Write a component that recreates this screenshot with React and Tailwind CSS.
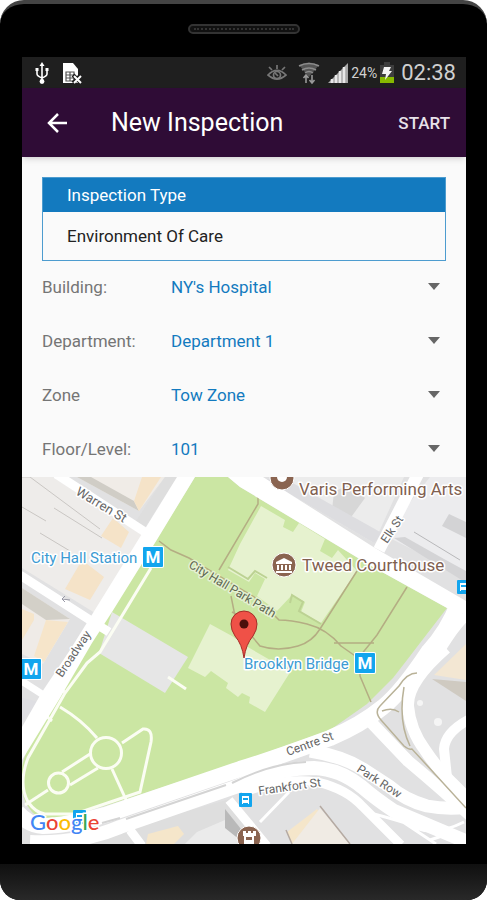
import React, { useState } from "react";

const fields = [
  { id: "building", label: "Building:", options: ["NY's Hospital"] },
  { id: "department", label: "Department:", options: ["Department 1"] },
  { id: "zone", label: "Zone", options: ["Tow Zone"] },
  { id: "floor", label: "Floor/Level:", options: ["101"] },
];

function StatusBar() {
  return (
    <div className="flex h-[31px] items-center bg-[#1f1f1f] pl-3 pr-2.5">
      <svg className="h-6 w-4" viewBox="0 0 16 24" fill="none" stroke="#fff" strokeWidth="1.6">
        <path d="M8 4v16M3 8v5q0 2 5 4M13 8v5q0 2-5 4" />
        <path d="M8 1l2.5 4h-5zM1.5 7h3v3h-3zM11.5 7h3v3h-3z" fill="#fff" stroke="none" />
        <circle cx="8" cy="20.5" r="2.4" fill="#fff" stroke="none" />
      </svg>
      <svg className="ml-3 h-6 w-5" viewBox="0 0 20 24">
        <path d="M1 2h10l5 6v14H1z" fill="#fff" />
        <path d="M4 11h8v9H4zM4 14h8M4 17h8M8 11v9" fill="none" stroke="#555" strokeWidth="1.2" />
        <path d="M11 14l8 8M19 14l-8 8" stroke="#1f1f1f" strokeWidth="4" />
        <path d="M12 15l7 7M19 15l-7 7" stroke="#fff" strokeWidth="2" />
      </svg>
      <div className="flex-1" />
      <svg className="h-6 w-5" viewBox="0 0 20 24" fill="none" stroke="#777" strokeWidth="1.7">
        <path d="M1 14q9-9 18 0q-9 8-18 0z" />
        <path d="M10 8V4M5 9L2 6M15 9l3-3M8 12l3 3" />
        <circle cx="10" cy="14" r="3.5" />
      </svg>
      <svg className="ml-2.5 h-6 w-6" viewBox="0 0 24 24">
        <path d="M2 4q10-5 20 0L12 16z" fill="#555" />
        <path d="M2 5q10-5 20 0M5 9q7-4 14 0M8 12q4-3 8 0" fill="none" stroke="#8c8c8c" strokeWidth="1.5" />
        <path d="M9 22v-7M6.500 17L9 14l2.500 3M15 14v7M12.500 19l2.500 3 2.500-3" fill="none" stroke="#999" strokeWidth="1.6" />
      </svg>
      <svg className="ml-1.5 h-6 w-[22px]" viewBox="0 0 22 24">
        <path d="M1 22L21 2v20z" fill="#a8a8a8" />
        <path d="M5 22v-4M9 22v-8M13 22V10M17 22V6" stroke="#e8e8e8" strokeWidth="2.5" />
      </svg>
      <span className="ml-0.5 text-sm text-[#d0d0d0]">24%</span>
      <svg className="ml-0.5 h-6 w-4" viewBox="0 0 16 24">
        <path d="M5 1h6v3h4v18H1V4h4z" fill="#3d3d3d" />
        <path d="M1 16h14v6H1z" fill="#86b900" />
        <path d="M5 6h7l-2 4h3l-7 9 1-6H3z" fill="#f5f5f5" />
      </svg>
      <span className="ml-1.5 text-[22px] text-[#d0d0d0]">02:38</span>
    </div>
  );
}

function SelectRow({ field }) {
  const [value, setValue] = useState(field.options[0]);

  return (
    <div className="flex h-[54px] items-center">
      <label htmlFor={field.id} className="w-[129px] text-[17px] text-[#757575]">
        {field.label}
      </label>
      <div className="relative flex-1">
        <select
          id={field.id}
          value={value}
          onChange={(e) => setValue(e.target.value)}
          className="w-full appearance-none bg-transparent text-[17px] text-[#137abf]"
        >
          {field.options.map((o) => (
            <option key={o}>{o}</option>
          ))}
        </select>
        <svg className="pointer-events-none absolute right-1.5 top-2 h-2 w-3" viewBox="0 0 12 8">
          <path d="M0 0h12L6 7z" fill="#666" />
        </svg>
      </div>
    </div>
  );
}

function Metro({ x, y }) {
  return (
    <g transform={`translate(${x} ${y})`}>
      <rect width="22" height="22" rx="2" fill="#fff" />
      <rect x="1" y="1" width="20" height="20" rx="1" fill="#12a5ee" />
      <text x="11" y="17" textAnchor="middle" fontSize="17" fontWeight="700" fill="#fff">M</text>
    </g>
  );
}

function BusStop({ x, y }) {
  return (
    <g transform={`translate(${x} ${y})`}>
      <rect width="13" height="14" rx="1" fill="#12a5ee" />
      <path d="M3 3h7v8H9v-1H4v1H3z" fill="#fff" />
      <path d="M4 5h5v2H4z" fill="#12a5ee" />
    </g>
  );
}

function Buildings() {
  return (
    <g>
      {/* west of Broadway */}
      <path d="M22 477h31l92 60-42 73-8 3-73-45z" fill="#eeecea" />
      <path d="M77 477l62 34 26-34z" fill="#f0ece7" />
      <path d="M77 477l62 34-5-10-43-24z" fill="#d0cdc6" />
      <path d="M22 477h8l70 52M22 507l24 14M54 508l48 30M40 533l30 18" fill="none" stroke="#c9c6c3" />
      <path d="M142 477h19l-22 34-5-10z" fill="#f5e3c8" />
      <path d="M113 518l16 14-8 16-20-12zM82 560l22 17-14 23-25-11z" fill="#f5e3c8" />
      <path d="M165 477h12l-32 50-9-6z" fill="#dedede" />
      <path d="M22 588l48 31-27 45-21-10z" fill="#efebe7" />
      <path d="M22 588l48 31-24 1-24-16z" fill="#d3d0c8" />
      <path d="M46 620l22 2-24 40-10-6zM22 640l12-20v-6l-12-5z" fill="#f6e5ca" />
      <path d="M22 698l17 4-17 20z" fill="#dedee2" />
      {/* north-east */}
      <path d="M290 477h114l-30 66-110-64z" fill="#ececec" />
      <path d="M334 492l16-8 15 14-16 22-17-10z" fill="#d7d7d7" />
      <path d="M264 479l110 64 8-10-100-56z" fill="#dddde0" />
      <path d="M430 477h36v100l-82-42z" fill="#ececee" />
      <path d="M394 538l74 46v-12l-24-13-39-22z" fill="#d4d4d6" />
      <path d="M449 514l17 8v16l-24-12z" fill="#d3d3d5" />
      <path d="M414 532l46 28" fill="none" stroke="#b8b8ba" />
      <path d="M466 644v36l-32-5z" fill="#f3e7d3" />
      <path d="M432 679l34 3v19z" fill="#cfcac1" />
      <circle cx="420" cy="703" r="3" fill="#f5f5f5" />
      <circle cx="438" cy="722" r="4" fill="#f5f5f5" />
      {/* south */}
      <path d="M70 844l160-45 30 45z" fill="#dedede" />
      <path d="M146 844l2-10 30-8 6 8-10 10zM287 832l30-23 6 8-31 27z" fill="#f5e6ca" />
      <path d="M292 844l28-36 30 36z" fill="#f0ebe4" />
      <path d="M185 844l12-12 28-12 23 24z" fill="#ebebeb" />
      <path d="M225 809l16 20 4 15-20-16z" fill="#b9b9b9" />
      <path d="M320 806l30 38M286 830l6 14" fill="none" stroke="#b5aaa2" strokeWidth="1.5" />
    </g>
  );
}

function Park() {
  return (
    <g>
      <path
        d="M195 477h33l12 10 133 80 74 41-27 35-13 17-14 18-26 26-37 26-90 32-135 44-47 12q-18 3-26-6-14-16-10-44 2-14 12-31l58-100 20-26 46-74z"
        fill="#cbe6a3"
      />
      {/* plaza */}
      <path d="M112 612l76 45-23 36-66-40z" fill="#e6e6e6" />
      {/* Tweed Courthouse */}
      <path
        d="M261 506l24 14-2 7 10 5 6-9 26 16-5 12 12 7 6-8 19 21-36 52-20-11 4-10-13-7-15 16-20-15 8-17-10-6-6 9-21-12 12-26z"
        fill="#e6f2cf"
      />
      <path d="M228 567l20 12 7-8 12 7M290 603l2-8 11 7-4 9 22 13" fill="none" stroke="#bcd293" strokeWidth="2" />
      {/* City Hall */}
      <path
        d="M210 624l22 12 14 10 38 22 5 6-24 38-16-9 1-6-8-4-4 4-12-9 2-5-17-12-6 6-17-9z"
        fill="#e6f2cf"
      />
      <path
        d="M159 541l12 9 18 8 70 42 20 20q12 0 28 4 20 5 34 22l20 14M258 495v9l-39 66M231 596l4 20 25 30q18 6 38 0 14-4 22-17l37-58M407 587l-30 48-8 10-9 11v20l11 26M334 643h40M232 612q8 5 22 5"
        fill="none"
        stroke="#b4ad83"
        strokeWidth="1.5"
      />
      {/* garden paths */}
      <g fill="none" stroke="#fbfdf3" strokeWidth="3">
        <path d="M151 568L100 652 87 663 65 693 28 758Q18 784 28 802 36 813 45 814L75 814 140 792 151 742Q153 728 143 729L122 743" />
        <path d="M60 707Q82 720 97 738M112 769l15 33M90 754l-28 18M98 768l-28 17M48 790l-23 15M59 688l7 5M45 715l7 6" />
        <circle cx="106" cy="753" r="15.5" />
        <circle cx="58.5" cy="783" r="10" />
        <path d="M168 677l18 12" />
      </g>
    </g>
  );
}

function Roads() {
  return (
    <g fill="none" stroke="#fff">
      <path d="M177 477h18l-37 61-46 74-20 31-32 55-38 62v-33l20-35 28-42 23-37z" fill="#fff" stroke="none" />
      <path d="M228 477h35l112 71 91 53v14l-19-7-74-41-133-80z" fill="#fff" stroke="none" />
      <path d="M56 474l92 60" strokeWidth="9" />
      <path d="M20 575l73 47 16 10" strokeWidth="9" />
      <path d="M20 680l25 16" strokeWidth="7" />
      <path d="M418 474l-39 76" strokeWidth="12" />
      <path d="M458 604q-10 26-29 47-28 42-46 56-22 18-53 31-60 22-90 31L105 815q-40 11-62 11-15-1-26-14" strokeWidth="16" />
      <path d="M470 614q-10 5-28 34" strokeWidth="9" />
      <path d="M30 842q50 2 90-15l118-41q38-18 76-18 26 1 48 19 14 12 32 24l76 32" strokeWidth="14" />
      <path d="M310 751q32 5 53 18l26 17q16 14 38 20 20 4 44 1" strokeWidth="13" />
      <path d="M368 719q15 16 40 42 38 32 66 58" strokeWidth="12" />
      <path d="M446 648q-39 34-38 58 2 24 17 44 17 26 45 50" strokeWidth="12" />
      <path d="M470 719q-25 13-26 30l4 38" strokeWidth="10" />
      <path d="M242 793q40-16 75-11 30 7 46 25l38 38" strokeWidth="9" />
      <path d="M229 800l38 46M130 830l12 16" strokeWidth="9" />
      <path d="M289 792l-29 30M374 814q38 10 42 14 20 8 48-6M400 820l36 24M430 840l24-8" strokeWidth="3" />
      <path d="M102 823l18-5M126 819l100-34M232 783q40-20 74-21" stroke="#d4d4d4" strokeWidth="2" />
      <path d="M417 673q-10 0-18 13l-19 20q-6 6 1 14l23 26q5 4 8 3l54 59M404 687q-6 34 6 59M382 711q10-4 17 1" stroke="#b9b298" strokeWidth="1.5" />
    </g>
  );
}

function SiteMap() {
  return (
    <svg
      className="block w-full font-[Roboto,'Liberation_Sans',sans-serif]"
      viewBox="22 477 444 367"
      role="img"
      aria-label="Map of the inspection site"
    >
      <rect x="22" y="477" width="444" height="367" fill="#e1e1e2" />
      <Buildings />
      <Park />
      <Roads />

      <g stroke="#fff" strokeWidth="3" strokeLinejoin="round" paintOrder="stroke">
        <g fill="#666" fontSize="13">
          <text transform="translate(75 494) rotate(31)">Warren St</text>
          <text transform="translate(188 567) rotate(31)" fontSize="12" fill="#5d6650" stroke="#e5f1d2">City Hall Park Path</text>
          <text transform="translate(387 544) rotate(-56)" fontSize="12">Elk St</text>
          <text transform="translate(62 678) rotate(-56)" fontSize="12">Broadway</text>
          <text transform="translate(288 756) rotate(-20)" fontSize="12">Centre St</text>
          <text transform="translate(259 795) rotate(-8)" fontSize="12">Frankfort St</text>
          <text transform="translate(356 771) rotate(33)" fontSize="12">Park Row</text>
        </g>
        <g fill="#3c9bd3" fontSize="15">
          <text x="31" y="563">City Hall Station</text>
          <text x="244" y="669">Brooklyn Bridge</text>
        </g>
        <g fill="#80604f" fontSize="17">
          <text x="299" y="495">Varis Performing Arts</text>
          <text x="302" y="571">Tweed Courthouse</text>
        </g>
      </g>
      <path d="M70 600l-8-1m3-3l-3 3 3 3" fill="none" stroke="#9898a5" />

      <Metro x={142} y={546} />
      <Metro x={354} y={652} />
      <Metro x={20} y={658} />
      <BusStop x={239} y={793} />
      <BusStop x={457} y={580} />
      <BusStop x={73} y={810} />

      <circle cx="284" cy="565" r="12" fill="#8a6450" stroke="#fff" />
      <path d="M284 558l8 4v2h-16v-2zM277 565h2v5h-2zM281 565h2v5h-2zM285 565h2v5h-2zM289 565h2v5h-2zM276 571h16v2h-16z" fill="#fff" />
      <circle cx="282" cy="478" r="12" fill="#8a6450" stroke="#fff" />
      <circle cx="282" cy="477" r="5" fill="#fff" />
      <circle cx="249" cy="838" r="12" fill="#8a6450" stroke="#fff" />
      <path d="M243 831h3v2h2v-2h3v2h2v-2h3v5h-2v8h-10v-8h-1zM246 837h6v3h-6z" fill="#fff" fillRule="evenodd" />

      {/* pin */}
      <path d="M244 658q-2-14-9-22-4-6-4-12a13 13 0 0 1 26 0q0 6-4 12-7 8-9 22z" fill="#ef5147" stroke="#a52d28" />
      <circle cx="244" cy="624" r="4.5" fill="#4d0e0b" />

      <text x="30" y="830" fontSize="22" fontWeight="500" fontFamily="Lato, sans-serif" stroke="#fff" strokeWidth="3" paintOrder="stroke">
        <tspan fill="#4285f4">G</tspan>
        <tspan fill="#ea4335">o</tspan>
        <tspan fill="#fbbc05">o</tspan>
        <tspan fill="#4285f4">g</tspan>
        <tspan fill="#34a853">l</tspan>
        <tspan fill="#ea4335">e</tspan>
      </text>
    </svg>
  );
}

export default function App() {
  return (
    <div className="min-h-screen bg-white font-[Roboto,'Liberation_Sans',sans-serif]">
      <div className="flex min-h-screen flex-col overflow-hidden rounded-t-[24px] rounded-b-[20px] border-t-4 border-[#444] bg-black">
        <div className="flex h-[53px] justify-center pt-5">
          <div className="flex h-[10px] w-[112px] items-center rounded-full border-2 border-[#333] bg-[#111] px-1">
            <div className="w-full border-t-2 border-dotted border-[#333]" />
          </div>
        </div>

        <div className="ml-[22px] mr-[21px] bg-[#fafafa]">
          <StatusBar />
          <header className="relative flex h-[69px] items-center bg-[#2f0c36] pl-6 pr-4 text-white shadow-md">
            <button type="button" aria-label="Back">
              <svg className="h-6 w-[22px]" viewBox="0 0 22 24" fill="none" stroke="#fff" strokeWidth="2.5">
                <path d="M21 12H3M12 3l-9 9 9 9" />
              </svg>
            </button>
            <h1 className="ml-[43px] flex-1 text-[25px]">New Inspection</h1>
            <button type="button" className="pt-0.5 text-[17px] font-medium text-[#e8e2e9]">START</button>
          </header>

          <main>
            <div className="px-5 pt-5">
              <section className="border border-[#4d9ccf] text-[17px]">
                <h2 className="bg-[#137abf] px-6 py-1.5 leading-[22px] text-white">Inspection Type</h2>
                <p className="px-6 py-3 leading-6 text-[#222]">Environment Of Care</p>
              </section>
              {fields.map((field) => (
                <SelectRow key={field.id} field={field} />
              ))}
            </div>
            <SiteMap />
          </main>
        </div>

        <div className="mt-5 min-h-9 flex-1 bg-linear-to-b from-[#101010] to-[#292929]" />
      </div>
    </div>
  );
}
